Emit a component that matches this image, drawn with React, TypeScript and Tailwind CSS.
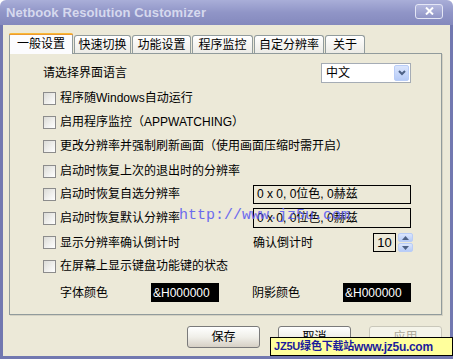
import React from "react";

const font = { fontFamily: '"Liberation Sans", "Noto Sans CJK SC", sans-serif' };

function Check({ label }: { label: string }) {
  return (
    <div className="flex items-center gap-[4px]">
      <span className="w-[13px] h-[13px] border border-[#8c8c8c] bg-gradient-to-br from-[#dcdcd7] to-white shrink-0" />
      <span className="text-[12px] text-black whitespace-nowrap">{label}</span>
    </div>
  );
}

function Tab({ label, active, w }: { label: string; active?: boolean; w: string }) {
  if (active) {
    return (
      <div className={`${w} h-[21px] relative z-10 bg-[#fcfcfe] border-x border-[#919b9c] rounded-t-[3px] flex flex-col`}>
        <div className="h-[3px] -mx-px rounded-t-[3px] bg-gradient-to-b from-[#ffc83c] to-[#e68b2c]" />
        <div className="flex-1 flex items-center justify-center text-[12px] pb-[1px]">{label}</div>
      </div>
    );
  }
  return (
    <div className={`${w} h-[18px] mt-[2px] border border-b-0 border-[#919b9c] rounded-t-[3px] bg-gradient-to-b from-white to-[#ecebe6] flex items-center justify-center text-[12px]`}>
      {label}
    </div>
  );
}

function Btn({ label, disabled }: { label: string; disabled?: boolean }) {
  return (
    <div
      className={`w-[73px] h-[22px] rounded-[3px] border flex items-center justify-center text-[12px] ${
        disabled
          ? "border-[#c9c7ba] bg-[#f5f4ea] text-[#aca899]"
          : "border-[#7a7a7a] bg-gradient-to-b from-white via-[#f0efe9] to-[#d6d0c5] text-black"
      }`}
    >
      {label}
    </div>
  );
}

export default function App() {
  return (
    <div className="w-[453px] h-[359px] flex flex-col relative overflow-hidden" style={font}>
      <div className="h-[25px] shrink-0 flex items-center justify-between pl-[6px] pr-[10px] bg-gradient-to-b from-[#a9aed8] via-[#9095c7] to-[#8489bd] rounded-t-[6px]">
        <span className="text-[13px] font-bold text-[#d6d9ee] tracking-[0.1px]">Netbook Resolution Customizer</span>
        <div className="w-[28px] h-[15px] -mt-[3px] rounded-[3px] border border-[#e4e6f5] bg-gradient-to-b from-[#b4b8de] to-[#9095c6] flex items-center justify-center">
          <svg width="9" height="8" viewBox="0 0 9 8">
            <path d="M1 0.5 L8 7.5 M8 0.5 L1 7.5" stroke="white" strokeWidth="2" />
          </svg>
        </div>
      </div>

      <div className="flex-1 flex flex-col bg-[#ece9d8] border-x-[3px] border-b-[3px] border-[#7278b0]">
        <div className="flex items-start pl-[6px] pt-[8px] gap-[1px]">
          <Tab label="一般设置" active w="w-[64px]" />
          <Tab label="快速切换" w="w-[57px]" />
          <Tab label="功能设置" w="w-[59px]" />
          <Tab label="程序监控" w="w-[61px]" />
          <Tab label="自定分辨率" w="w-[70px]" />
          <Tab label="关于" w="w-[40px]" />
        </div>

        <div className="ml-[6px] -mt-px w-[433px] h-[262px] border border-[#919b9c] shadow-[1px_1px_0_#d5d2c3] bg-[#ece9d8] pl-[33px] pt-[9px] flex flex-col relative">
          <div className="h-[20px] flex items-center">
            <span className="w-[278px] text-[12px]">请选择界面语言</span>
            <div className="w-[90px] h-[20px] border border-[#a5acb5] bg-white flex items-center justify-between pl-[4px] pr-[1px]">
              <span className="text-[12px]">中文</span>
              <div className="w-[15px] h-[16px] rounded-[2px] border border-[#b9cdf7] bg-gradient-to-b from-[#dbe6fd] to-[#b6cbf7] flex items-center justify-center">
                <svg width="8" height="6" viewBox="0 0 8 6">
                  <path d="M1 1 L4 4 L7 1" stroke="#4d6185" strokeWidth="2" fill="none" />
                </svg>
              </div>
            </div>
          </div>

          <div className="mt-[3px] flex flex-col">
            <div className="h-[24px] flex items-center"><Check label="程序随Windows自动运行" /></div>
            <div className="h-[24px] flex items-center"><Check label="启用程序监控（APPWATCHING）" /></div>
            <div className="h-[24px] flex items-center"><Check label="更改分辨率并强制刷新画面（使用画面压缩时需开启）" /></div>
            <div className="h-[24px] flex items-center pt-[2px]"><Check label="启动时恢复上次的退出时的分辨率" /></div>
            <div className="h-[24px] flex items-center">
              <div className="w-[210px]"><Check label="启动时恢复自选分辨率" /></div>
              <div className="w-[158px] h-[19px] border border-black flex items-center pl-[3px] text-[12px]">0 x 0, 0位色, 0赫兹</div>
            </div>
            <div className="h-[24px] flex items-center">
              <div className="w-[210px]"><Check label="启动时恢复默认分辨率" /></div>
              <div className="w-[158px] h-[20px] border border-black flex items-center pl-[3px] text-[12px]">0 x 0, 0位色, 0赫兹</div>
            </div>
            <div className="h-[24px] flex items-center pt-[1px]">
              <div className="w-[210px]"><Check label="显示分辨率确认倒计时" /></div>
              <span className="w-[120px] text-[12px]">确认倒计时</span>
              <div className="w-[23px] h-[19px] border border-black flex items-center justify-center text-[13px]">10</div>
              <div className="ml-[2px] w-[15px] h-[19px] flex flex-col gap-px">
                <div className="flex-1 rounded-[2px] border border-[#b9cdf7] bg-gradient-to-b from-[#dbe6fd] to-[#b6cbf7] flex items-center justify-center">
                  <svg width="7" height="4" viewBox="0 0 7 4"><path d="M0 4 L3.5 0 L7 4 Z" fill="#4d6185" /></svg>
                </div>
                <div className="flex-1 rounded-[2px] border border-[#b9cdf7] bg-gradient-to-b from-[#dbe6fd] to-[#b6cbf7] flex items-center justify-center">
                  <svg width="7" height="4" viewBox="0 0 7 4"><path d="M0 0 L3.5 4 L7 0 Z" fill="#4d6185" /></svg>
                </div>
              </div>
            </div>
            <div className="h-[24px] flex items-center"><Check label="在屏幕上显示键盘功能键的状态" /></div>
          </div>

          <div className="mt-[5px] h-[19px] flex items-center pl-[17px]">
            <span className="w-[91px] text-[12px]">字体颜色</span>
            <div className="w-[68px] h-[19px] bg-black text-white text-[12px] flex items-center pl-[2px]">&amp;H000000</div>
            <span className="ml-[33px] w-[91px] text-[12px]">阴影颜色</span>
            <div className="w-[68px] h-[19px] bg-black text-white text-[12px] flex items-center pl-[2px]">&amp;H000000</div>
          </div>

          <span
            className="absolute left-[169px] top-[151px] text-[15px] text-[#5e5ef0] opacity-90 pointer-events-none"
            style={{ fontFamily: '"Liberation Mono", monospace' }}
          >
            http://www.jz5u.com
          </span>
        </div>

        <div className="mt-[11px] flex justify-end gap-[18px] pr-[8px]">
          <Btn label="保存" />
          <Btn label="取消" />
          <Btn label="应用" disabled />
        </div>
      </div>

      <div className="absolute left-[270px] top-[337px] w-[183px] h-[19px] border border-black bg-[#ffff9c] flex items-center pl-[3px] font-bold text-[#1b1b9c] whitespace-nowrap">
        <span className="text-[11px] tracking-[-0.2px]">JZ5U绿色下载站</span>
        <span className="text-[12px] tracking-[-0.3px]">www.jz5u.com</span>
      </div>
    </div>
  );
}
